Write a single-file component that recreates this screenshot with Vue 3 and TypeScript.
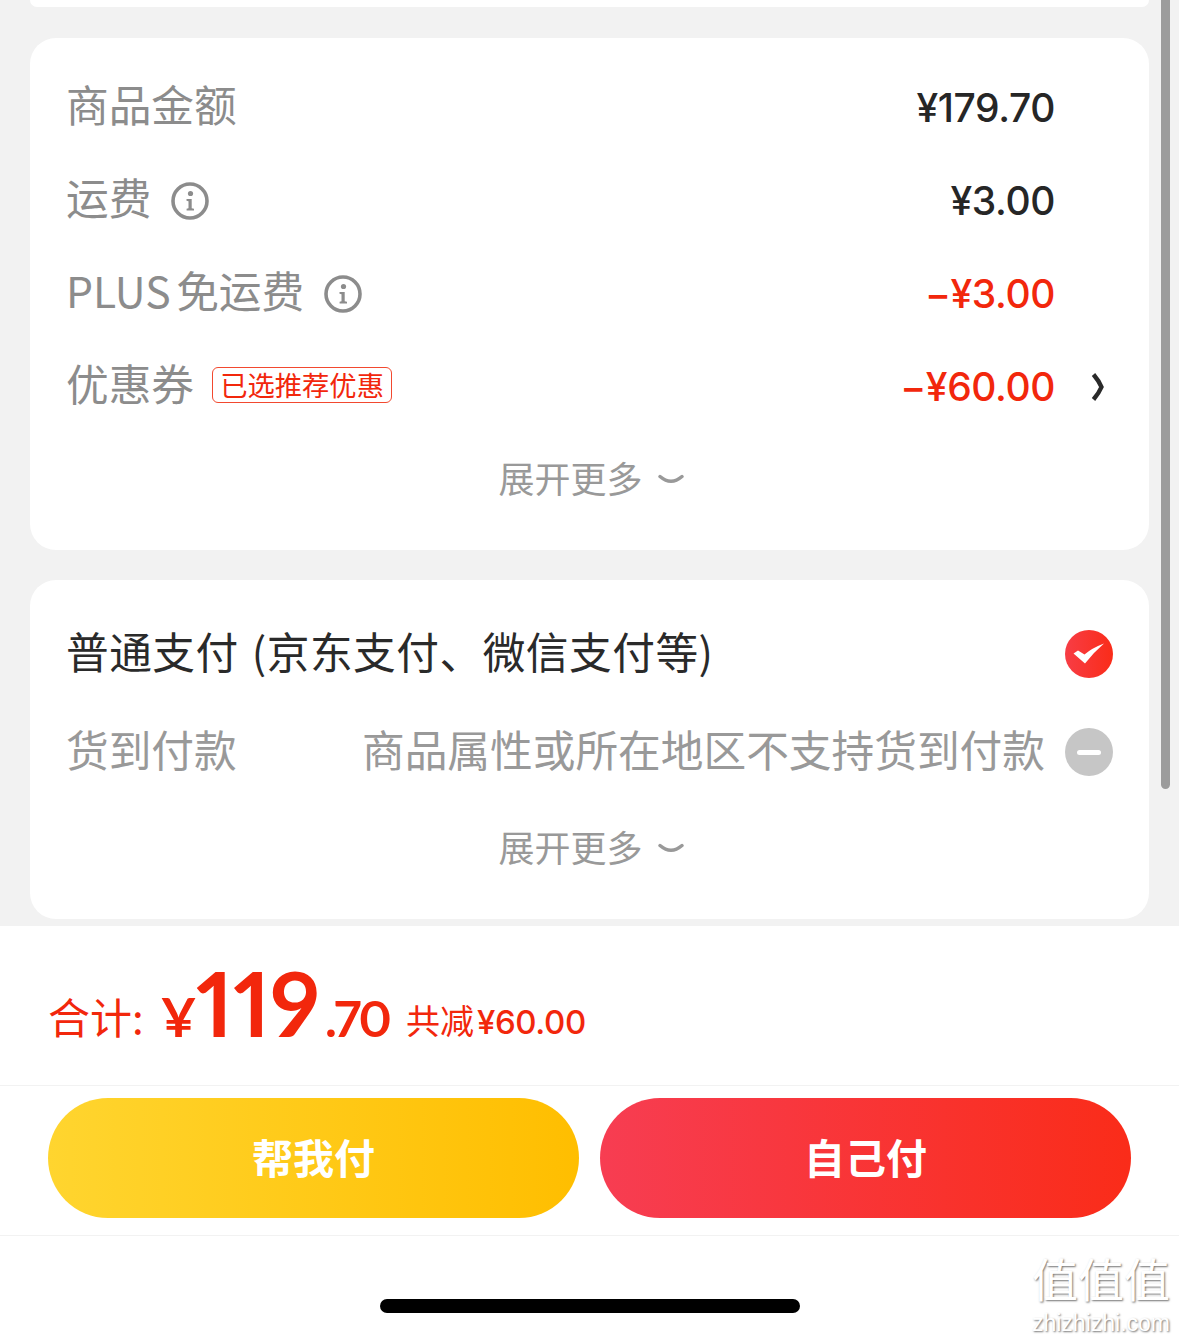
<script setup lang="ts">
interface FeeRow {
  label: string
  value: string
  info?: boolean
  tag?: string
  red?: boolean
  arrow?: boolean
}

const feeRows: FeeRow[] = [
  { label: '商品金额', value: '¥179.70' },
  { label: '运费', value: '¥3.00', info: true },
  { label: 'PLUS 免运费', value: '−¥3.00', info: true, red: true },
  { label: '优惠券', value: '−¥60.00', tag: '已选推荐优惠', red: true, arrow: true }
]
</script>

<template>
  <div class="page">
    <div class="scrollbar"></div>
    <div class="content">
      <div class="card-tail"></div>

      <section class="card fee-card">
        <div v-for="row in feeRows" :key="row.label" class="fee-row">
          <span class="label">{{ row.label }}</span>
          <svg v-if="row.info" class="info" viewBox="0 0 38 38">
            <circle cx="19" cy="19" r="17" fill="none" stroke="#8c8c8c" stroke-width="3.6" />
            <circle cx="19.5" cy="11.5" r="2.6" fill="#8c8c8c" />
            <path d="M15.5 17h5.2v9.2l2.3.6v1.7h-7.4v-1.7l1.9-.6v-7l-2-.5z" fill="#8c8c8c" />
          </svg>
          <span v-if="row.tag" class="tag">{{ row.tag }}</span>
          <span class="value" :class="{ red: row.red }">{{ row.value }}</span>
          <span class="arrow-slot">
            <svg v-if="row.arrow" class="arrow" viewBox="0 0 14 30">
              <path d="M2.5 2.5Q8 9 10.5 15 8 21 2.5 27.5" fill="none" stroke="#2a2a2a" stroke-width="4.4" />
            </svg>
          </span>
        </div>
        <div class="expand">
          <span>展开更多</span>
          <svg viewBox="0 0 26 14"><path d="M2 3.5Q13 13 24 3.5" fill="none" stroke="#999" stroke-width="3.4" stroke-linecap="round" /></svg>
        </div>
      </section>

      <section class="card pay-card">
        <div class="pay-row">
          <span class="pay-name">普通支付 (京东支付、微信支付等)</span>
          <svg class="radio" viewBox="0 0 48 48">
            <defs>
              <linearGradient id="radioRed" x1="0" y1="0" x2="1" y2="0">
                <stop offset="0" stop-color="#f73d45" />
                <stop offset="1" stop-color="#fa2c19" />
              </linearGradient>
            </defs>
            <circle cx="24" cy="24" r="24" fill="url(#radioRed)" />
            <path d="M8.5 23.5 13 20.5 19.5 24.5Q27 18 39 13.5 29 22 20 33.5Z" fill="#fff" />
          </svg>
        </div>
        <div class="pay-row">
          <span class="pay-off">货到付款</span>
          <span class="pay-hint">商品属性或所在地区不支持货到付款</span>
          <span class="radio minus"><i></i></span>
        </div>
        <div class="expand pay-expand">
          <span>展开更多</span>
          <svg viewBox="0 0 26 14"><path d="M2 3.5Q13 13 24 3.5" fill="none" stroke="#999" stroke-width="3.4" stroke-linecap="round" /></svg>
        </div>
      </section>
    </div>

    <footer class="footer">
      <div class="total">
        <span class="total-label">合计:</span>
        <span class="yen">¥</span>
        <span class="big">119</span>
        <span class="cents">.70</span>
        <span class="saved">共减<b>¥60.00</b></span>
      </div>
      <div class="buttons">
        <button class="btn yellow">帮我付</button>
        <button class="btn redbtn">自己付</button>
      </div>
      <div class="home"><div class="home-bar"></div></div>
    </footer>

    <div class="watermark">
      <div class="wm-logo">值值值</div>
      <div class="wm-url">zhizhizhi.com</div>
    </div>
  </div>
</template>

<style scoped>
.page {
  position: relative;
  width: 1179px;
  height: 1338px;
  overflow: hidden;
  background: #f2f2f2;
  font-family: "Noto Sans CJK SC", "Lato", sans-serif;
}

.scrollbar {
  position: absolute;
  left: 1161px;
  top: 0;
  width: 9px;
  height: 789px;
  background: #9c9c9c;
  border-radius: 0 0 5px 5px;
}

.content {
  width: 1119px;
  margin-left: 30px;
  height: 926px;
}

.card-tail {
  height: 7px;
  background: #fff;
  border-radius: 0 0 24px 24px;
}

.card {
  background: #fff;
  border-radius: 26px;
}

.fee-card {
  margin-top: 31px;
  height: 512px;
  padding: 23px 0 0 36px;
  box-sizing: border-box;
}

.fee-row {
  display: flex;
  align-items: center;
  height: 93px;
}

.label {
  font-size: 42.7px;
  line-height: 1;
  padding-bottom: 8px;
  color: #8c8c8c;
  word-spacing: -4px;
  white-space: nowrap;
}

.info {
  width: 38px;
  height: 38px;
  margin-left: 20px;
}

.tag {
  margin-left: 18px;
  margin-bottom: 4px;
  height: 36px;
  box-sizing: border-box;
  width: 180px;
  border: 1px solid #f2492f;
  border-radius: 6px;
  color: #f2270c;
  font-size: 27.3px;
  line-height: 33px;
  text-align: center;
  white-space: nowrap;
}

.value {
  margin-left: auto;
  font-family: "Inter", sans-serif;
  font-weight: 500;
  font-size: 39px;
  letter-spacing: -0.4px;
  color: #262626;
}

.value.red {
  color: #f2270c;
}

.arrow-slot {
  width: 94px;
  display: flex;
  padding-left: 36px;
  box-sizing: border-box;
}

.arrow {
  width: 14px;
  height: 30px;
}

.expand {
  height: 93px;
  display: flex;
  align-items: center;
  justify-content: center;
  gap: 15px;
  padding-right: 33px;
  color: #999;
  font-size: 36px;
}

.expand span {
  line-height: 1;
  padding-bottom: 6px;
}

.expand svg {
  width: 26px;
  height: 14px;
}

.pay-card {
  margin-top: 30px;
  height: 339px;
  padding: 25px 36px 0 36px;
  box-sizing: border-box;
}

.pay-row {
  display: flex;
  align-items: center;
  justify-content: space-between;
  height: 98px;
}

.pay-name {
  font-size: 42.7px;
  line-height: 1;
  padding-bottom: 8px;
  color: #2a2a2a;
  word-spacing: 3px;
  letter-spacing: 0.5px;
  white-space: nowrap;
}

.pay-off,
.pay-hint {
  font-size: 42.7px;
  line-height: 1;
  padding-bottom: 8px;
  color: #999;
  white-space: nowrap;
}

.pay-hint {
  margin-left: auto;
  margin-right: 20px;
}

.radio {
  width: 48px;
  height: 48px;
  flex: none;
}

.minus {
  display: flex;
  align-items: center;
  justify-content: center;
  border-radius: 50%;
  background: #c6c6c6;
}

.minus i {
  width: 24px;
  height: 5px;
  border-radius: 3px;
  background: #fff;
}

.pay-expand {
  height: 96px;
  padding-right: 0;
  padding-left: 3px;
}

.footer {
  height: 412px;
  background: #fff;
}

.total {
  height: 160px;
  box-sizing: border-box;
  padding: 0 0 0 48px;
  display: flex;
  align-items: baseline;
  color: #f2270c;
  border-bottom: 1px solid #f2f2f2;
  line-height: 1;
}

.total-label {
  font-size: 42px;
  width: 112px;
  padding-top: 72px;
  transform: translateY(-3px);
}

.yen,
.big,
.cents {
  font-family: "Lato", sans-serif;
  font-feature-settings: "pnum";
  font-weight: 700;
}

.yen {
  font-size: 54px;
  width: 36px;
}

.big {
  font-size: 90px;
  width: 129px;
}

.cents {
  font-size: 50px;
  letter-spacing: -2.5px;
  width: 81px;
}

.saved {
  font-size: 34px;
  white-space: nowrap;
  transform: translateY(-3px);
}

.saved b {
  font-family: "Inter", sans-serif;
  font-size: 33px;
  font-weight: 500;
  letter-spacing: -0.4px;
  margin-left: 3px;
}

.buttons {
  display: flex;
  gap: 21px;
  padding: 12px 48px 17px;
  border-bottom: 1px solid #f2f2f2;
}

.btn {
  width: 531px;
  height: 120px;
  border: none;
  border-radius: 60px;
  color: #fff;
  padding: 0 0 4px;
  font-family: "Noto Sans CJK SC", sans-serif;
  font-weight: 700;
  font-size: 41px;
}

.yellow {
  background: linear-gradient(90deg, #ffd52f, #ffbe00);
}

.redbtn {
  background: linear-gradient(90deg, #f73d52, #fa2c19);
}

.home {
  display: flex;
  justify-content: center;
  padding-top: 63px;
}

.home-bar {
  width: 420px;
  height: 14px;
  border-radius: 7px;
  background: #000;
  margin-left: 1px;
}

.watermark {
  position: absolute;
  left: 1028px;
  top: 1244px;
  width: 146px;
  text-align: center;
  color: #fff;
  text-shadow: 1px 1px 2px rgba(0, 0, 0, 0.55);
}

.wm-logo {
  font-size: 46px;
  line-height: 66px;
}

.wm-url {
  font-family: "Liberation Sans", sans-serif;
  font-size: 23px;
  line-height: 26px;
}
</style>

<style>
body {
  margin: 0;
  background: #f2f2f2;
}
</style>
